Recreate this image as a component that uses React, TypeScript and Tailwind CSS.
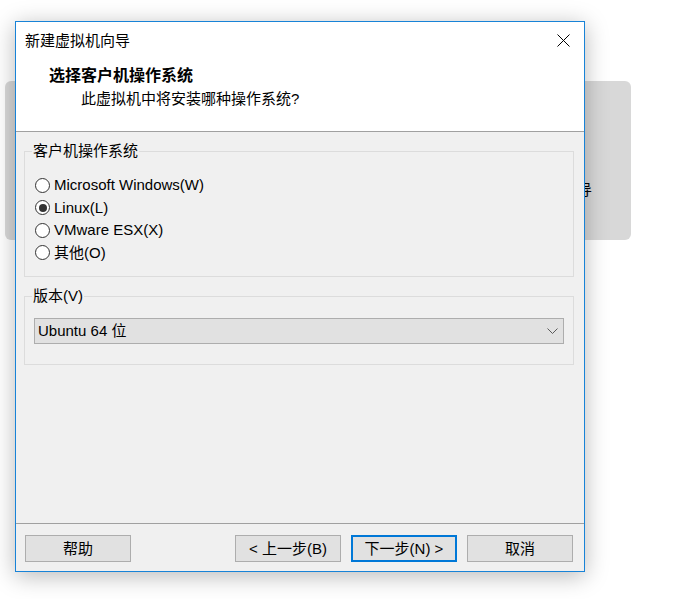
import React from 'react';

const FONT = "[font-family:'Liberation_Sans','Noto_Sans_CJK_SC',sans-serif]";

const OS_OPTIONS = [
  { id: 'windows', label: 'Microsoft Windows(W)' },
  { id: 'linux', label: 'Linux(L)' },
  { id: 'esx', label: 'VMware ESX(X)' },
  { id: 'other', label: '其他(O)' },
];

function Radio({ checked }: { checked: boolean }) {
  return (
    <div className="w-[15px] h-[15px] rounded-full border border-[#333333] bg-white flex items-center justify-center shrink-0">
      {checked && <div className="w-[8px] h-[8px] rounded-full bg-[#333333]" />}
    </div>
  );
}

function GroupBox({ label, className, children }: { label: string; className?: string; children: React.ReactNode }) {
  return (
    <div className={`relative border border-[#dcdcdc] ${className ?? ''}`}>
      <span className="absolute left-[7px] top-[-10px] px-[1px] bg-[#f0f0f0] leading-[18px]">{label}</span>
      {children}
    </div>
  );
}

function Button({ children, isDefault }: { children: React.ReactNode; isDefault?: boolean }) {
  return (
    <button
      className={`w-[106px] h-[27px] bg-[#e1e1e1] flex items-center justify-center leading-[18px] ${
        isDefault ? 'border-2 border-[#0078d7]' : 'border border-[#adadad]'
      }`}
    >
      {children}
    </button>
  );
}

export default function App() {
  const selected = 'linux';

  return (
    <div className={`relative w-[674px] h-[599px] overflow-hidden bg-white text-[15px] text-black ${FONT}`}>
      {/* window behind the dialog */}
      <div className="absolute left-[5px] top-[81px] w-[626px] h-[159px] rounded-[6px] bg-[#d8d8d8]">
        <span className="absolute left-[572px] top-[101px] leading-[15px]">导</span>
      </div>

      {/* wizard dialog */}
      <div className="absolute left-[15px] top-[21px] w-[570px] h-[551px] flex flex-col border border-[#1883d7] bg-[#f0f0f0] shadow-[0_4px_22px_rgba(0,0,0,0.28)]">
        {/* title bar */}
        <div className="h-[38px] bg-white flex items-center justify-between pl-[9px] pr-[14px]">
          <span className="leading-[20px]">新建虚拟机向导</span>
          <svg width="13" height="13" viewBox="0 0 13 13" className="mt-[-2px]">
            <path d="M0.5 0.5 L12.5 12.5 M12.5 0.5 L0.5 12.5" stroke="#000" strokeWidth="1" fill="none" />
          </svg>
        </div>

        {/* header */}
        <div className="h-[71px] bg-white flex flex-col pt-[6px]">
          <span className="pl-[33px] font-bold text-[16px] leading-[20px]">选择客户机操作系统</span>
          <span className="pl-[65px] mt-[3px] leading-[20px]">此虚拟机中将安装哪种操作系统?</span>
        </div>
        <div className="h-px bg-[#a0a0a0]" />

        {/* body */}
        <div className="flex-1 flex flex-col pl-[8px] pr-[10px] pt-[19px]">
          <GroupBox label="客户机操作系统" className="h-[126px] pt-[22px] pl-[10px]">
            <div className="flex flex-col">
              {OS_OPTIONS.map((o) => (
                <div key={o.id} className="h-[22.5px] flex items-center gap-[4px]">
                  <Radio checked={o.id === selected} />
                  <span className="leading-[18px]">{o.label}</span>
                </div>
              ))}
            </div>
          </GroupBox>

          <GroupBox label="版本(V)" className="h-[69px] mt-[19px] pt-[21px] pl-[9px] pr-[9px]">
            <div className="h-[26px] bg-[#e1e1e1] border border-[#adadad] flex items-center justify-between pl-[3px] pr-[5px]">
              <span className="leading-[18px]">Ubuntu 64 位</span>
              <svg width="11" height="7" viewBox="0 0 11 7">
                <path d="M0.5 0.5 L5.5 5.5 L10.5 0.5" stroke="#5a5a5a" strokeWidth="1" fill="none" />
              </svg>
            </div>
          </GroupBox>
        </div>

        {/* footer */}
        <div className="h-px bg-[#a0a0a0]" />
        <div className="flex items-center pl-[9px] pr-[11px] pt-[11px] pb-[9px]">
          <Button>帮助</Button>
          <div className="flex-1" />
          <div className="flex gap-[10px]">
            <Button>&lt; 上一步(B)</Button>
            <Button isDefault>下一步(N) &gt;</Button>
            <Button>取消</Button>
          </div>
        </div>
      </div>
    </div>
  );
}
